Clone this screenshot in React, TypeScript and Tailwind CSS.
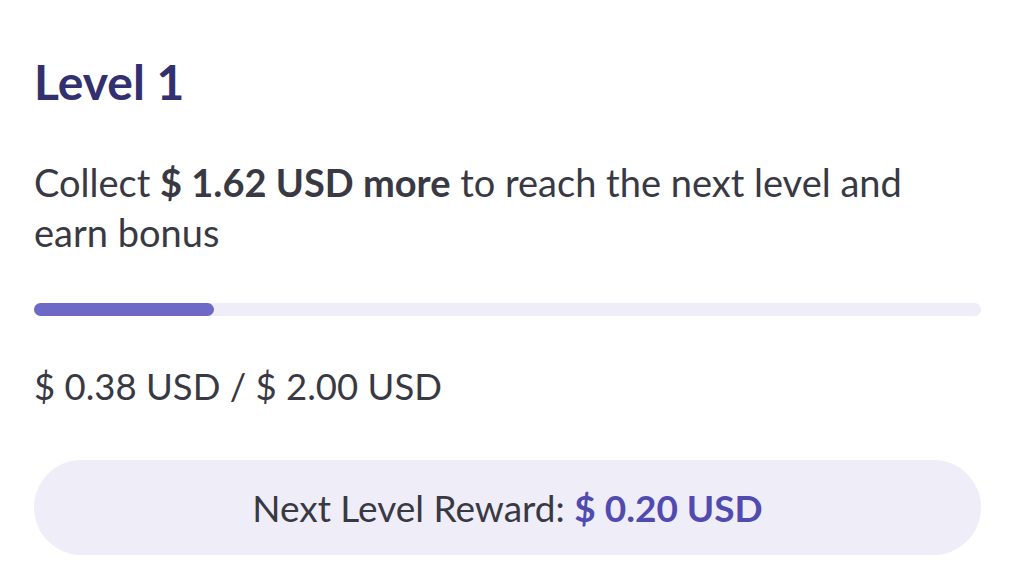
import React from "react";

const current = 0.38;
const target = 2.0;

export default function App() {
  const pct = (current / target) * 100;
  return (
    <div className="w-[1024px] h-[579px] bg-white pl-[34px] pr-[43px] pt-[50px] font-['Lato','Liberation_Sans',sans-serif] text-[#393943]">
      <h1 className="text-[48px] leading-[64px] font-bold text-[#33306f]">Level 1</h1>
      <p className="mt-[43px] text-[38px] leading-[50px]">
        Collect <span className="font-bold">$ 1.62 USD more</span> to reach the next level and earn bonus
      </p>
      <div className="mt-[46px] h-[13px] w-full rounded-full bg-[#efedf8]">
        <div className="h-full rounded-full bg-[#6d69c6]" style={{ width: `${pct}%` }} />
      </div>
      <p className="mt-[48px] text-[36.5px] leading-[44px]">$ 0.38 USD / $ 2.00 USD</p>
      <div className="mt-[52px] flex h-[95px] items-center justify-center rounded-full bg-[#efedf8]">
        <p className="text-[37px] leading-[44px]">
          Next Level Reward: <span className="font-bold text-[#514bb0]">$ 0.20 USD</span>
        </p>
      </div>
    </div>
  );
}
